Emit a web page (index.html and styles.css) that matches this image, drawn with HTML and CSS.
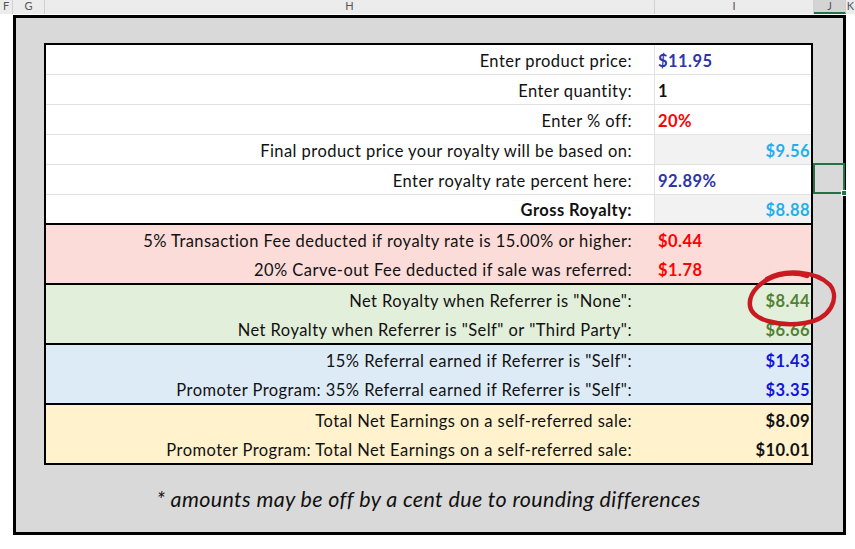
FILE: index.html
```html
<!DOCTYPE html>
<html>
<head>
<meta charset="utf-8">
<link rel="stylesheet" href="styles.css">
</head>
<body>
<div class="colhdr">
  <div class="h h-f">F</div>
  <div class="h h-g">G</div>
  <div class="h h-h">H</div>
  <div class="h h-i">I</div>
  <div class="h h-j">J</div>
  <div class="h h-k">K</div>
</div>
<div class="frame">
  <div class="sheet">
    <div class="sec white">
      <div class="row"><div class="l">Enter product price:</div><div class="v navy">$11.95</div></div>
      <div class="row"><div class="l">Enter quantity:</div><div class="v black">1</div></div>
      <div class="row"><div class="l">Enter % off:</div><div class="v red">20%</div></div>
      <div class="row"><div class="l">Final product price your royalty will be based on:</div><div class="v r sky shade">$9.56</div></div>
      <div class="row"><div class="l">Enter royalty rate percent here:</div><div class="v navy">92.89%</div></div>
      <div class="row"><div class="l b">Gross Royalty:</div><div class="v r sky shade">$8.88</div></div>
    </div>
    <div class="sec pink">
      <div class="row"><div class="l">5% Transaction Fee deducted if royalty rate is 15.00% or higher:</div><div class="v red">$0.44</div></div>
      <div class="row"><div class="l">20% Carve-out Fee deducted if sale was referred:</div><div class="v red">$1.78</div></div>
    </div>
    <div class="sec green">
      <div class="row"><div class="l">Net Royalty when Referrer is "None":</div><div class="v r grn">$8.44</div></div>
      <div class="row"><div class="l">Net Royalty when Referrer is "Self" or "Third Party":</div><div class="v r grn">$6.66</div></div>
    </div>
    <div class="sec blue">
      <div class="row"><div class="l">15% Referral earned if Referrer is "Self":</div><div class="v r blu">$1.43</div></div>
      <div class="row"><div class="l">Promoter Program: 35% Referral earned if Referrer is "Self":</div><div class="v r blu">$3.35</div></div>
    </div>
    <div class="sec yellow">
      <div class="row"><div class="l">Total Net Earnings on a self-referred sale:</div><div class="v r black">$8.09</div></div>
      <div class="row"><div class="l">Promoter Program: Total Net Earnings on a self-referred sale:</div><div class="v r black">$10.01</div></div>
    </div>
  </div>
  <div class="note">* amounts may be off by a cent due to rounding differences</div>
</div>
<div class="selection"><div class="handle"></div></div>
<svg class="circle" width="95" height="70" viewBox="0 0 95 70">
  <path d="M 22 16 C 38 6, 70 7, 85 22 C 95 35, 86 56, 60 60 C 34 64, 7 57, 5 43 C 3 29, 18 16, 34 12 C 44 10, 54 10, 62 13" fill="none" stroke="#c81a20" stroke-width="4.5" stroke-linecap="round"/>
</svg>
</body>
</html>
```
FILE: styles.css
```css
* { box-sizing: border-box; }
html, body { margin: 0; padding: 0; }
body {
  position: relative;
  width: 855px;
  height: 549px;
  overflow: hidden;
  background: #ffffff;
  font-family: Lato, "Liberation Sans", sans-serif;
  color: #111;
}
.colhdr {
  display: flex;
  height: 14px;
  background: #ececec;
}
.colhdr .h {
  border-right: 1px solid #d0d0d0;
  text-align: center;
  font-size: 11px;
  line-height: 12px;
  color: #555;
  flex: none;
}
.h-f { width: 13px; }
.h-g { width: 32px; }
.h-h { width: 610px; }
.h-i { width: 159px; }
.h-j { width: 32px; background: #d4d4d4; border-bottom: 2px solid #217346; }
.h-k { flex: 1 !important; border-right: 0 !important; }
.frame {
  margin: 1px 0 0 13px;
  width: 833px;
  height: 520px;
  border: 3px solid #000;
  background: #d9d9d9;
  padding: 25px 0 0 28px;
}
.sheet {
  width: 769px;
  border: 2px solid #000;
  background: #fff;
}
.sec + .sec { border-top: 2px solid #000; }
.pink { background: #fcdcd9; }
.green { background: #e2efda; }
.blue { background: #ddebf7; }
.yellow { background: #fff2cc; }
.row {
  display: grid;
  grid-template-columns: 608px 1fr;
  height: 29px;
  font-size: 16.5px;
  letter-spacing: 0.45px;
}
.white .row { height: 30px; border-bottom: 1px solid #e1e1e1; }
.white .row:last-child { height: 28px; border-bottom: 0; }
.l {
  display: flex;
  align-items: center;
  justify-content: flex-end;
  padding: 2px 22px 0 0;
  white-space: nowrap;
}
.b { font-weight: 700; }
.v {
  display: flex;
  align-items: center;
  padding: 2px 0 0 3px;
  font-weight: 700;
  border-left: 1px solid transparent;
  white-space: nowrap;
}
.white .v { border-left-color: #e1e1e1; }
.v.r { justify-content: flex-end; padding-right: 1px; }
.shade { background: #f2f2f2; }
.navy { color: #2d35a8; }
.black { color: #111; }
.red { color: #ff0000; }
.sky { color: #1fb0ec; }
.grn { color: #538135; }
.blu { color: #1414d4; }
.note {
  width: 769px;
  margin-top: 21px;
  text-align: center;
  font-style: italic;
  font-size: 21.5px;
  letter-spacing: 0.35px;
  line-height: 26px;
  color: #111;
}
.selection {
  position: absolute;
  left: 813px;
  top: 163px;
  width: 32px;
  height: 31px;
  border: 2px solid #217346;
}
.handle {
  position: absolute;
  right: -4px;
  bottom: -4px;
  width: 6px;
  height: 6px;
  background: #217346;
  border: 1px solid #fff;
}
.circle {
  position: absolute;
  left: 745px;
  top: 263px;
}
```
